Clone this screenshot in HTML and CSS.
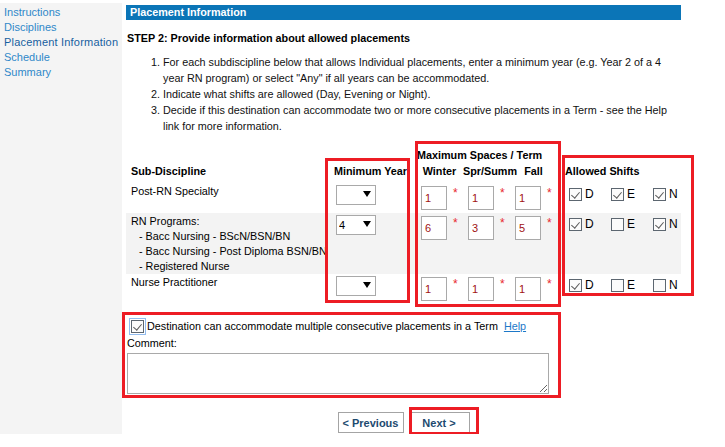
FILE: index.html
```html
<!DOCTYPE html>
<html lang="en">
<head>
    <meta charset="UTF-8">
    <meta name="viewport" content="width=device-width, initial-scale=1.0">
    <title>Placement Information</title>
    <link rel="stylesheet" href="styles.css">
</head>
<body>
<div class="page">
    <div class="side">
        <a href="#">Instructions</a>
        <a href="#">Disciplines</a>
        <a href="#" class="current">Placement Information</a>
        <a href="#">Schedule</a>
        <a href="#">Summary</a>
    </div>

    <div class="main">
        <div class="bar">Placement Information</div>
        <h4 class="step">STEP 2: Provide information about allowed placements</h4>
        <ol class="steps">
            <li>For each subdiscipline below that allows Individual placements, enter a minimum year (e.g. Year 2 of a 4 year RN program) or select "Any" if all years can be accommodated.</li>
            <li>Indicate what shifts are allowed (Day, Evening or Night).</li>
            <li>Decide if this destination can accommodate two or more consecutive placements in a Term - see the Help link for more information.</li>
        </ol>

        <table class="grid">
            <colgroup>
                <col class="c-name">
                <col class="c-year">
                <col class="c-space">
                <col class="c-space">
                <col class="c-space">
                <col class="c-shift">
            </colgroup>
            <tr class="head-top">
                <th></th>
                <th></th>
                <th colspan="3" class="max">Maximum Spaces / Term</th>
                <th></th>
            </tr>
            <tr class="head">
                <th class="sub">Sub-Discipline</th>
                <th class="yr">Minimum Year</th>
                <th>Winter</th>
                <th>Spr/Summ</th>
                <th>Fall</th>
                <th class="sh">Allowed Shifts</th>
            </tr>
            <tr>
                <td class="name">Post-RN Specialty</td>
                <td class="year"><span class="pick"><select><option></option><option>Any</option><option>1</option><option>2</option><option>3</option><option>4</option></select></span></td>
                <td class="space"><input type="text" value="1"><span class="req">*</span></td>
                <td class="space"><input type="text" value="1"><span class="req">*</span></td>
                <td class="space"><input type="text" value="1"><span class="req">*</span></td>
                <td class="shift">
                    <label><input type="checkbox" checked>D</label><label><input type="checkbox" checked>E</label><label><input type="checkbox" checked>N</label>
                </td>
            </tr>
            <tr class="alt">
                <td class="name">
                    RN Programs:
                    <span class="item">- Bacc Nursing - BScN/BSN/BN</span>
                    <span class="item">- Bacc Nursing - Post Diploma BSN/BN</span>
                    <span class="item">- Registered Nurse</span>
                </td>
                <td class="year"><span class="pick"><select><option></option><option>Any</option><option>1</option><option>2</option><option>3</option><option selected>4</option></select></span></td>
                <td class="space"><input type="text" value="6"><span class="req">*</span></td>
                <td class="space"><input type="text" value="3"><span class="req">*</span></td>
                <td class="space"><input type="text" value="5"><span class="req">*</span></td>
                <td class="shift">
                    <label><input type="checkbox" checked>D</label><label><input type="checkbox">E</label><label><input type="checkbox" checked>N</label>
                </td>
            </tr>
            <tr>
                <td class="name">Nurse Practitioner</td>
                <td class="year"><span class="pick"><select><option></option><option>Any</option><option>1</option><option>2</option><option>3</option><option>4</option></select></span></td>
                <td class="space"><input type="text" value="1"><span class="req">*</span></td>
                <td class="space"><input type="text" value="1"><span class="req">*</span></td>
                <td class="space"><input type="text" value="1"><span class="req">*</span></td>
                <td class="shift">
                    <label><input type="checkbox" checked>D</label><label><input type="checkbox">E</label><label><input type="checkbox">N</label>
                </td>
            </tr>
        </table>

        <div class="multi">
            <input type="checkbox" class="focus" checked>
            <span>Destination can accommodate multiple consecutive placements in a Term</span>
            <a href="#" class="help">Help</a>
        </div>
        <div class="comment-label">Comment:</div>
        <textarea class="comment"></textarea>

        <div class="nav">
            <button class="prev">&lt; Previous</button>
            <button class="next">Next &gt;</button>
        </div>
    </div>

    <!-- red highlight boxes -->
    <div class="mark mark-year"></div>
    <div class="mark mark-space"></div>
    <div class="mark mark-shift"></div>
    <div class="mark mark-multi"></div>
    <div class="mark mark-next"></div>
</div>
</body>
</html>
```

FILE: styles.css
```css
*{
    margin: 0;
    padding: 0;
    box-sizing: border-box;
}
body{
    font-family: "Liberation Sans", Arial, sans-serif;
    font-size: 10.8px;
    color: #000;
    background: #fff;
}
.page{
    position: relative;
    display: flex;
    align-items: stretch;
    width: 725px;
    padding-top: 3px;
}

/* left menu */
.side{
    width: 122px;
    padding: 2px 0 0 4px;
    background: #f4f4f4;
    display: flex;
    flex-direction: column;
    font-size: 11px;
}
.side a{
    color: #2f88c9;
    text-decoration: none;
    line-height: 15px;
}
.side a.current{
    color: #17609f;
    letter-spacing: 0.2px;
}

/* main column */
.main{
    width: 555px;
    margin-left: 4px;
    padding-top: 2px;
    padding-bottom: 1px;
}
.bar{
    background: #0b75b7;
    color: #fff;
    font-weight: bold;
    height: 15px;
    line-height: 15px;
    padding-left: 4px;
}
.step{
    font-size: 10.8px;
    line-height: 15px;
    margin-top: 11px;
    padding-left: 1px;
}
.steps{
    margin-top: 8px;
    padding-left: 37px;
    padding-right: 4px;
    line-height: 16px;
    color: #111;
}

/* table */
.grid{
    width: 555px;
    margin-top: 13px;
    table-layout: fixed;
    border-collapse: collapse;
    border-spacing: 0;
}
.c-name{ width: 207px; }
.c-year{ width: 83px; }
.c-space{ width: 47px; }
.c-shift{ width: 124px; }
.grid th{
    font-weight: bold;
    line-height: 16px;
    white-space: nowrap;
    padding: 0;
}
.head-top th{
    height: 16px;
}
.grid th.max{
    text-align: left;
    padding-left: 1px;
}
.head th{
    padding-bottom: 4px;
}
.grid th.sub{
    text-align: left;
    padding-left: 5px;
}
.grid th.yr{
    text-align: left;
    padding-left: 1px;
}
.grid th.sh{
    text-align: left;
    padding-left: 8px;
}
.grid td{
    vertical-align: top;
    padding: 0;
}
.alt td{
    background: #f3f3f3;
}
.name{
    padding: 1px 0 0 5px !important;
    line-height: 15px;
    white-space: nowrap;
}
.name .item{
    display: block;
    padding-left: 8px;
}
.year{
    padding: 2px 0 0 3px !important;
}
.pick{
    position: relative;
    display: inline-block;
}
.pick select{
    appearance: none;
    -webkit-appearance: none;
    width: 40px;
    height: 20px;
    border: 1px solid #a9a9a9;
    border-radius: 0;
    background: #fff;
    font-family: "Liberation Sans", Arial, sans-serif;
    font-size: 11px;
    color: #000;
    padding-left: 2px;
    display: block;
}
.pick::after{
    content: "";
    position: absolute;
    right: 5px;
    top: 6px;
    border-left: 4px solid transparent;
    border-right: 4px solid transparent;
    border-top: 6px solid #000;
    pointer-events: none;
}
.space{
    padding: 3px 0 3px 5px !important;
    white-space: nowrap;
}
.space input{
    width: 26px;
    height: 24px;
    border: 1px solid #a9a9a9;
    padding-left: 3px;
    font-family: "Liberation Sans", Arial, sans-serif;
    font-size: 11px;
    color: #a01212;
    vertical-align: top;
}
.req{
    display: inline-block;
    vertical-align: top;
    color: #e8282e;
    font-size: 12px;
    line-height: 10px;
    margin: 2px 0 0 6px;
}
.shift{
    padding: 5px 0 0 8px !important;
    white-space: nowrap;
}
.shift label{
    display: inline-block;
    width: 42px;
    line-height: 13px;
    font-size: 12px;
}

/* checkboxes, old style */
input[type=checkbox]{
    appearance: none;
    -webkit-appearance: none;
    position: relative;
    width: 13px;
    height: 13px;
    border: 1px solid #5c6670;
    background: #fbfbfb;
    vertical-align: top;
    margin: 0 3px 0 4px;
}
input[type=checkbox]:checked::after{
    content: "";
    position: absolute;
    left: 3px;
    top: 1px;
    width: 4px;
    height: 7px;
    border: solid #5a5a5a;
    border-width: 0 1.5px 1.5px 0;
    transform: rotate(40deg);
}

/* bottom area */
.multi{
    margin-top: 15px;
    padding-left: 5px;
    line-height: 15px;
    display: flex;
    align-items: center;
}
.multi input.focus{
    margin: 0 3px 0 0;
    outline: 1px solid #92bcef;
    outline-offset: 1px;
}
.help{
    color: #1d78c8;
    margin-left: 6px;
    text-decoration: underline;
}
.comment-label{
    line-height: 15px;
    margin-top: 2px;
    padding-left: 1px;
}
.comment{
    display: block;
    width: 422px;
    height: 41px;
    margin: 2px 0 0 1px;
    border: 1px solid #a9a9a9;
    border-radius: 0;
    font-family: "Liberation Sans", Arial, sans-serif;
    font-size: 11px;
}
.nav{
    display: flex;
    justify-content: center;
    gap: 5px;
    margin-top: 18px;
}
.nav button{
    height: 21px;
    background: #fff;
    border: 1px solid #a4a4a4;
    border-radius: 0;
    font-family: "Liberation Sans", Arial, sans-serif;
    font-size: 11px;
    font-weight: bold;
    color: #1d4a6f;
}
.prev{
    width: 66px;
}
.next{
    width: 61px;
}

/* red highlight boxes drawn over the form */
.mark{
    position: absolute;
    border: 3px solid #ed1c24;
    pointer-events: none;
}
.mark-year{ left: 325px; top: 158px; width: 85px; height: 145px; }
.mark-space{ left: 415px; top: 141px; width: 146px; height: 166px; }
.mark-shift{ left: 562px; top: 155px; width: 132px; height: 141px; }
.mark-multi{ left: 122px; top: 312px; width: 439px; height: 86px; }
.mark-next{ left: 409px; top: 407px; width: 70px; height: 28px; }
```
